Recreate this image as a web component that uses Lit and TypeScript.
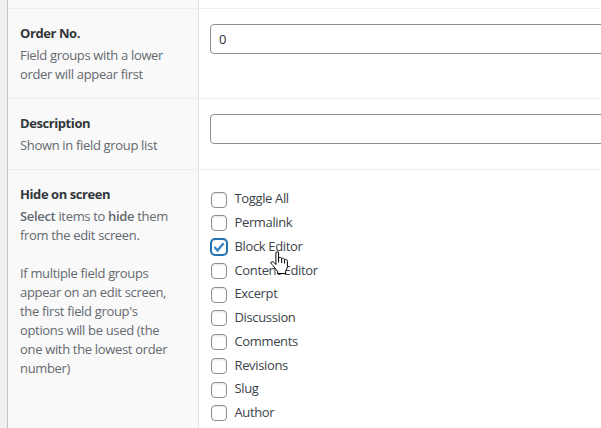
import { LitElement, html, css, svg } from "lit";
import { customElement, property } from "lit/decorators.js";
import { classMap } from "lit/directives/class-map.js";

@customElement("check-item")
class CheckItem extends LitElement {
  @property() label = "";
  @property({ type: Boolean }) checked = false;

  static styles = css`
    :host { display: block; height: 23.75px; }
    .row { display: flex; align-items: flex-start; }
    .box {
      box-sizing: border-box; flex: none; width: 16px; height: 16px;
      margin: 2px 7.5px 0 1px; border: 1px solid #8c8f94; border-radius: 4px;
      background: #fff; box-shadow: inset 0 1px 2px rgba(0, 0, 0, 0.1);
    }
    .box.on { border-color: #2271b1; box-shadow: 0 0 0 1px #2271b1; }
    svg { display: block; width: 14px; height: 14px; }
    .text { margin-top: 0.75px; line-height: 17px; white-space: nowrap; }
  `;

  render() {
    return html`<label class="row">
      <span class=${classMap({ box: true, on: this.checked })}>
        ${this.checked
          ? html`<svg viewBox="0 0 14 14">${svg`<path d="M2.4 6.9 L5.5 10.5 L11.6 3.2" fill="none" stroke="#3582c4" stroke-width="2.3" />`}</svg>`
          : ""}
      </span>
      <span class="text">${this.label}</span>
    </label>`;
  }
}

@customElement("app-root")
class AppRoot extends LitElement {
  static styles = css`
    :host {
      display: flex; position: relative; box-sizing: border-box; width: 601px; height: 428px;
      overflow: hidden; background: #f0f0f1; padding-left: 7px;
      font: 13px/19px "Segoe UI", "Open Sans", "Noto Sans", sans-serif;
      letter-spacing: -0.36px; color: #3c434a;
    }
    .panel {
      flex: 1; min-width: 0; border-left: 1px solid #c3c4c7; background: #fff;
      display: grid; grid-template-rows: 8px 90px 71px 259px;
    }
    .field { display: grid; grid-template-columns: 191px 1fr; }
    .field + .field { border-top: 1px solid #eee; }
    .label { background: #f9f9f9; border-right: 1px solid #e1e1e1; padding: 15px 0 0 12px; white-space: nowrap; }
    .title { font-weight: 700; color: #32373c; line-height: 19px; margin-bottom: 3px; letter-spacing: -0.42px; }
    .desc { color: #646970; letter-spacing: -0.33px; }
    .desc b { font-weight: 600; }
    .input { padding: 15px 0 0 11px; overflow: hidden; }
    .control {
      box-sizing: border-box; height: 30px; width: 420px; border: 1px solid #8c8f94;
      border-radius: 4px; background: #fff; padding: 0 8px; color: #2c3338; line-height: 28px;
    }
    .list { padding: 19.6px 0 0 11px; }
    .cursor { position: absolute; left: 269px; top: 251px; width: 20px; height: 24px; }
  `;

  items = ["Toggle All", "Permalink", "Block Editor", "Content Editor", "Excerpt",
    "Discussion", "Comments", "Revisions", "Slug", "Author"];

  render() {
    return html`
      <div class="panel">
        <div class="field"><div class="label"></div><div></div></div>
        <div class="field">
          <div class="label">
            <div class="title">Order No.</div>
            <div class="desc">Field groups with a lower<br />order will appear first</div>
          </div>
          <div class="input"><div class="control">0</div></div>
        </div>
        <div class="field">
          <div class="label">
            <div class="title">Description</div>
            <div class="desc">Shown in field group list</div>
          </div>
          <div class="input"><div class="control"></div></div>
        </div>
        <div class="field">
          <div class="label">
            <div class="title">Hide on screen</div>
            <div class="desc"><b>Select</b> items to <b>hide</b> them<br />from the edit screen.<br /><br />If multiple field groups<br />appear on an edit screen,<br />the first field group's<br />options will be used (the<br />one with the lowest order<br />number)</div>
          </div>
          <div class="list">
            ${this.items.map((t) => html`<check-item label=${t} ?checked=${t === "Block Editor"}></check-item>`)}
          </div>
        </div>
      </div>
      <svg class="cursor" viewBox="0 0 20 24">
        <path d="M6.9 13.5V2C6.9 .2 9.6 .2 9.6 2V7.2C10.3 5.9 12.6 6.2 12.7 7.8C13.5 6.7 15.5 7.2 15.6 8.7C16.6 7.9 18.4 8.5 18.4 10.2V15.4C18.4 17.8 16.6 18.8 16.6 20.5V22.5H8.7V20.5C6.8 18.2 5 16 3.8 14.3C2.9 13 1.8 12.8 1.9 11.8C2.1 10.3 4.1 10.5 5.1 11.6Z" fill="#fff" stroke="#000" stroke-width="1" stroke-linejoin="round" />
        <path d="M9.6 7V11.5M12.7 8V12M15.6 9V12.5" fill="none" stroke="#000" stroke-width="1" />
      </svg>
    `;
  }
}
